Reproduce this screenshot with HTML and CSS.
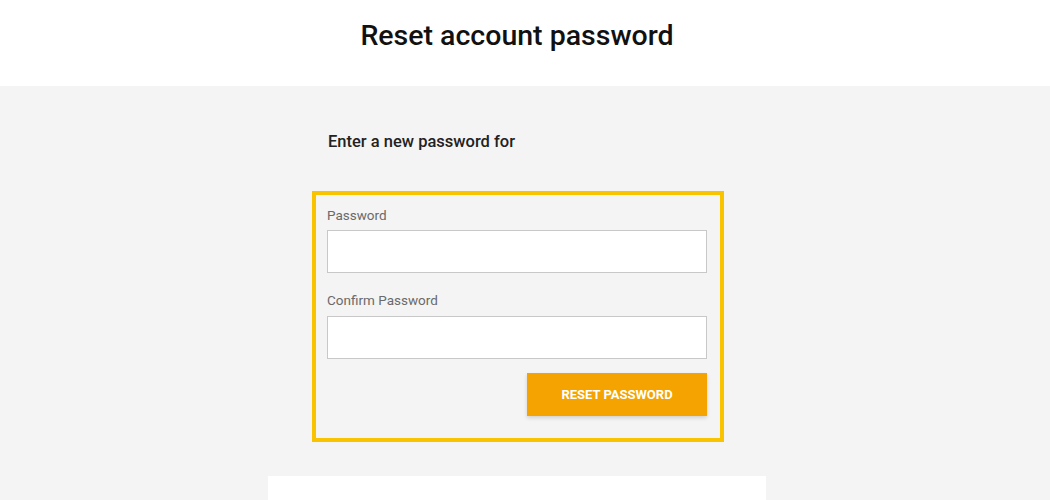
FILE: index.html
```html
<!DOCTYPE html>
<html lang="en">
<head>
<meta charset="utf-8">
<title>Reset account password</title>
<link rel="stylesheet" href="styles.css">
</head>
<body>
<div class="page">
  <header class="header">
    <h1 class="title">Reset account password</h1>
  </header>
  <main class="main">
    <div class="column">
      <p class="intro">Enter a new password for</p>
      <form class="reset-box">
        <label class="field-label" for="pw">Password</label>
        <input class="field-input" id="pw" type="password">
        <label class="field-label second" for="pw2">Confirm Password</label>
        <input class="field-input" id="pw2" type="password">
        <div class="actions">
          <button type="button" class="btn">RESET PASSWORD</button>
        </div>
      </form>
    </div>
    <div class="footer-block"></div>
  </main>
</div>
</body>
</html>
```

FILE: styles.css
```css
html, body {
  margin: 0;
  padding: 0;
  background: #f4f4f4;
  font-family: Roboto, "Liberation Sans", sans-serif;
}
.page {
  height: 500px;
  overflow: hidden;
}
.header {
  background: #ffffff;
  height: 86px;
  padding-right: 16px;
  display: flex;
  justify-content: center;
}
.title {
  margin: 18px 0 0;
  font-size: 28.5px;
  line-height: 36px;
  font-weight: 500;
  color: #111;
}
.main {
  padding-right: 16px;
  display: flex;
  flex-direction: column;
  align-items: center;
}
.column {
  width: 498px;
}
.intro {
  margin: 0;
  padding: 45px 0 0 60px;
  font-size: 16.5px;
  line-height: 22px;
  font-weight: 500;
  color: #222;
}
.reset-box {
  margin: 38px 0 0 44px;
  width: 380px;
  border: 4px solid #f9c300;
  padding: 10px 13px 22px 11px;
  display: flex;
  flex-direction: column;
}
.field-label {
  font-size: 13.5px;
  line-height: 20px;
  color: #6a6a6a;
  margin-bottom: 5px;
}
.field-label.second {
  margin-top: 17px;
  margin-bottom: 6px;
}
.field-input {
  box-sizing: border-box;
  width: 380px;
  height: 43px;
  border: 1px solid #c8c8c8;
  background: #fff;
  margin: 0;
  outline: none;
}
.actions {
  display: flex;
  justify-content: flex-end;
  width: 380px;
  margin-top: 14px;
}
.btn {
  width: 180px;
  height: 43px;
  border: none;
  background: #f5a300;
  color: #fff;
  font-family: Roboto, "Liberation Sans", sans-serif;
  font-size: 13px;
  font-weight: 700;
  box-shadow: 0 2px 4px rgba(0,0,0,0.15);
  cursor: pointer;
}
.footer-block {
  margin-top: 34px;
  width: 498px;
  height: 25px;
  background: #fff;
}
```
